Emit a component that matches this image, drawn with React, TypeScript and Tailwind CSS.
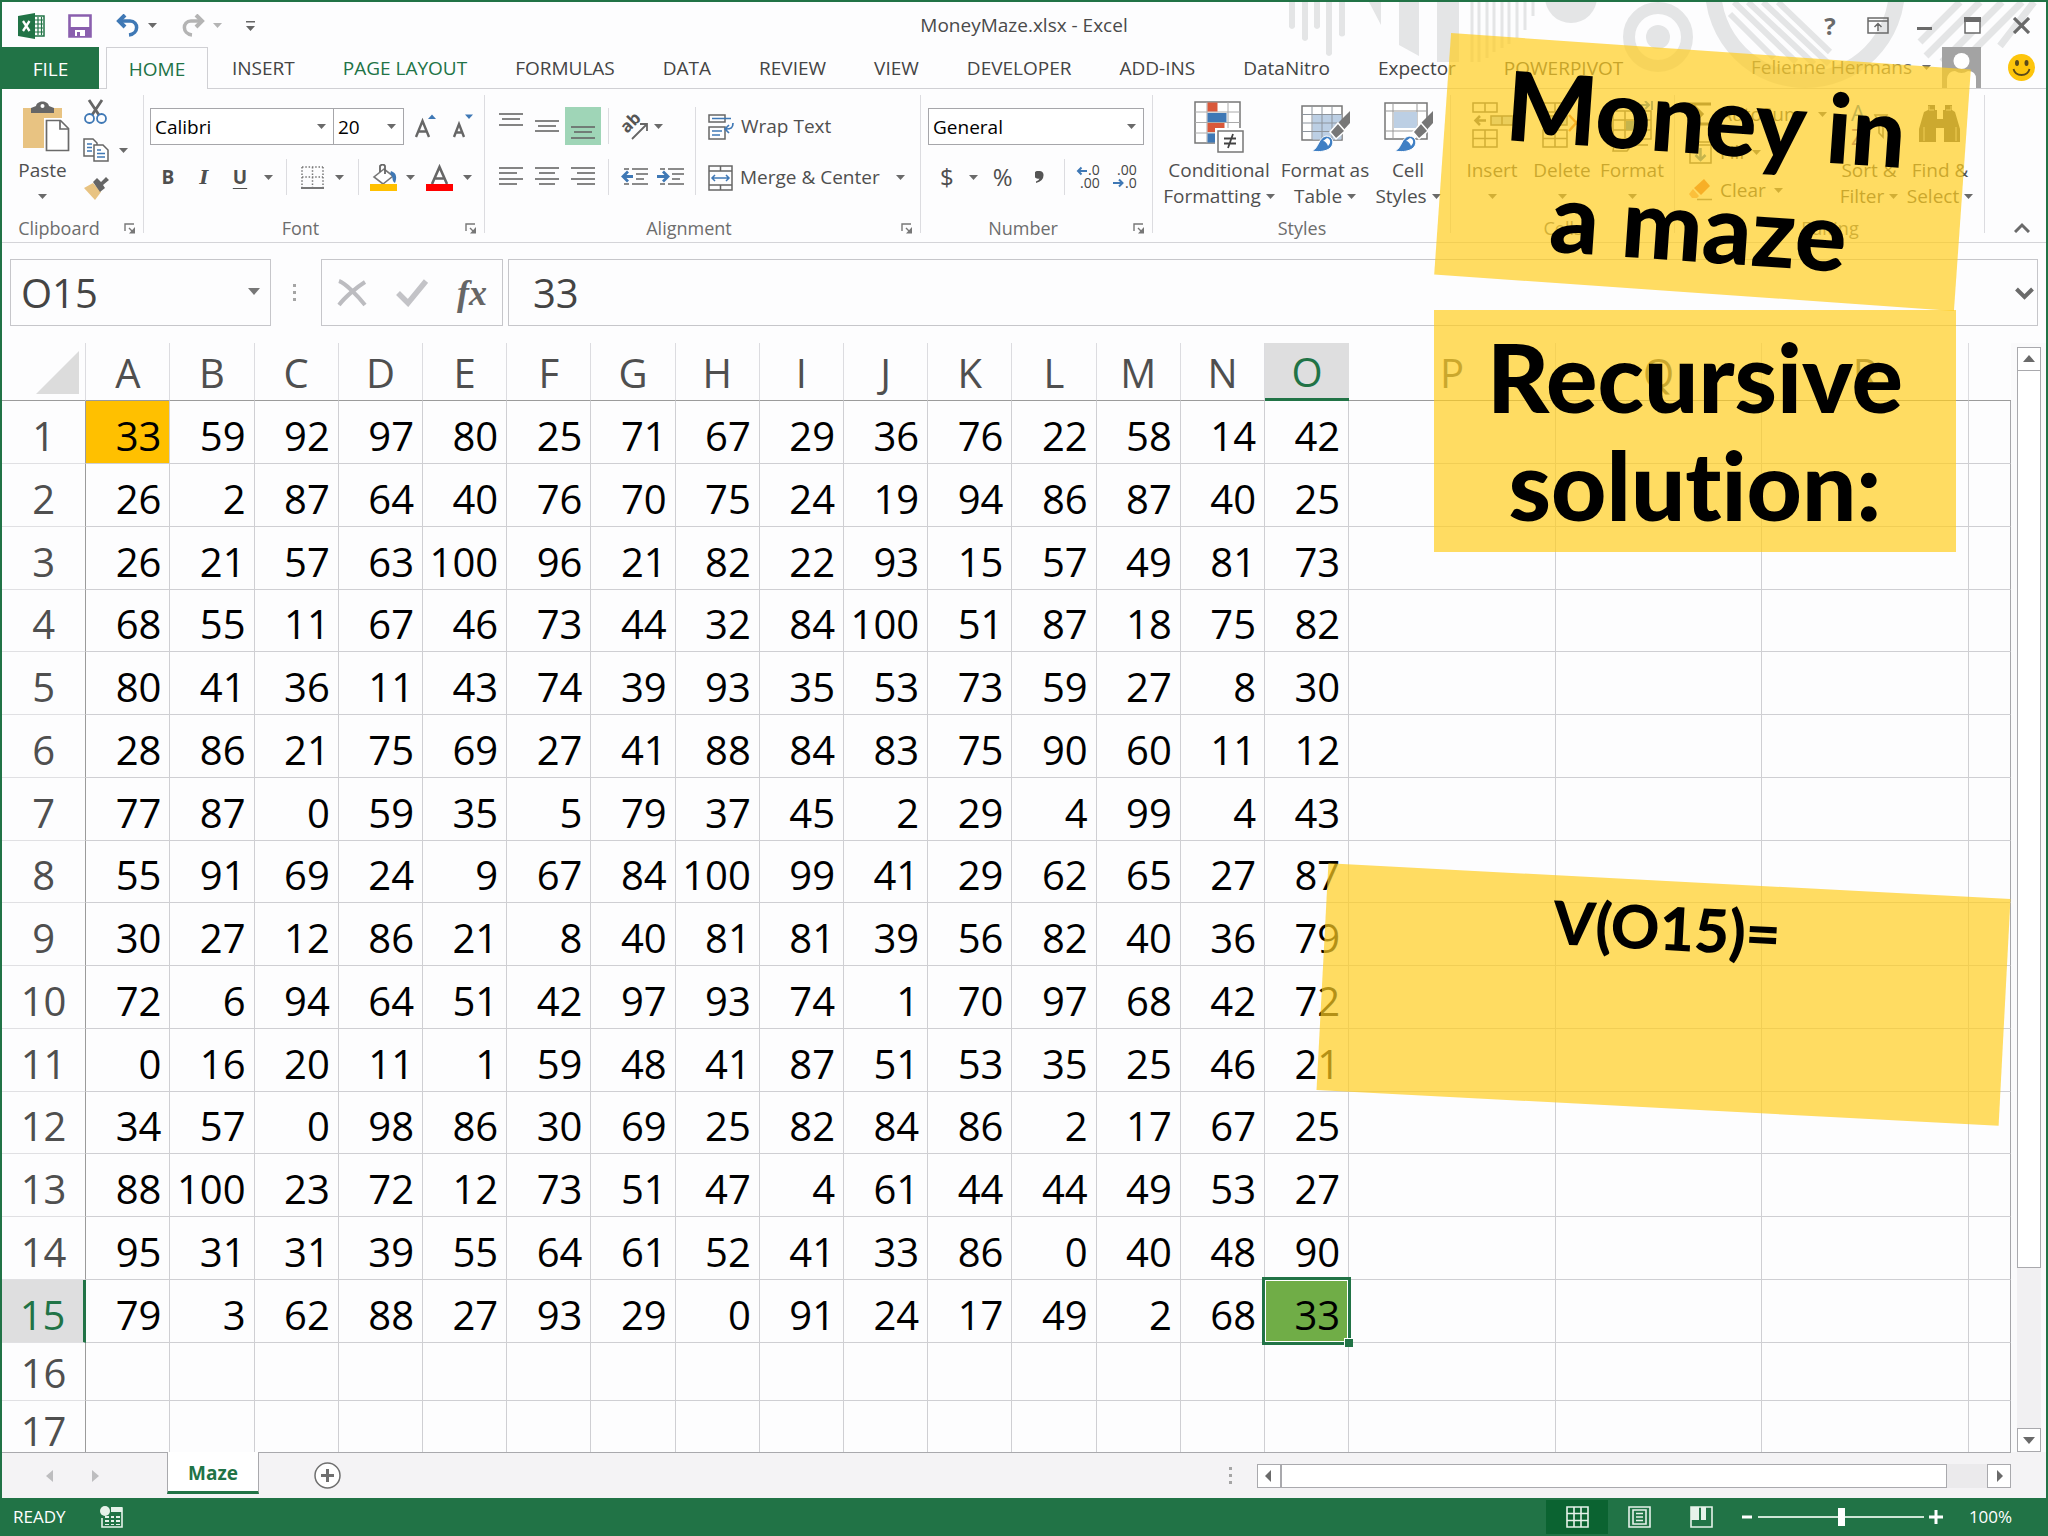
import React, { useState } from 'react';

const COLUMNS = ['A', 'B', 'C', 'D', 'E', 'F', 'G', 'H', 'I', 'J', 'K', 'L', 'M', 'N', 'O'];
const WIDE_COLUMNS = ['P', 'Q', 'R'];

const MAZE = [
  [33, 59, 92, 97, 80, 25, 71, 67, 29, 36, 76, 22, 58, 14, 42],
  [26, 2, 87, 64, 40, 76, 70, 75, 24, 19, 94, 86, 87, 40, 25],
  [26, 21, 57, 63, 100, 96, 21, 82, 22, 93, 15, 57, 49, 81, 73],
  [68, 55, 11, 67, 46, 73, 44, 32, 84, 100, 51, 87, 18, 75, 82],
  [80, 41, 36, 11, 43, 74, 39, 93, 35, 53, 73, 59, 27, 8, 30],
  [28, 86, 21, 75, 69, 27, 41, 88, 84, 83, 75, 90, 60, 11, 12],
  [77, 87, 0, 59, 35, 5, 79, 37, 45, 2, 29, 4, 99, 4, 43],
  [55, 91, 69, 24, 9, 67, 84, 100, 99, 41, 29, 62, 65, 27, 87],
  [30, 27, 12, 86, 21, 8, 40, 81, 81, 39, 56, 82, 40, 36, 79],
  [72, 6, 94, 64, 51, 42, 97, 93, 74, 1, 70, 97, 68, 42, 72],
  [0, 16, 20, 11, 1, 59, 48, 41, 87, 51, 53, 35, 25, 46, 21],
  [34, 57, 0, 98, 86, 30, 69, 25, 82, 84, 86, 2, 17, 67, 25],
  [88, 100, 23, 72, 12, 73, 51, 47, 4, 61, 44, 44, 49, 53, 27],
  [95, 31, 31, 39, 55, 64, 61, 52, 41, 33, 86, 0, 40, 48, 90],
  [79, 3, 62, 88, 27, 93, 29, 0, 91, 24, 17, 49, 2, 68, 33],
];

const TABS = [
  { name: 'INSERT' },
  { name: 'PAGE LAYOUT', accent: true },
  { name: 'FORMULAS' },
  { name: 'DATA' },
  { name: 'REVIEW' },
  { name: 'VIEW' },
  { name: 'DEVELOPER' },
  { name: 'ADD-INS' },
  { name: 'DataNitro' },
  { name: 'Expector' },
  { name: 'POWERPIVOT' },
];

function Caret({ className = 'text-[#6a6a6a]' }: { className?: string }) {
  return (
    <svg viewBox="0 0 9 5" className={`w-[9px] h-[5px] shrink-0 ${className}`} fill="currentColor">
      <path d="M0 0h9L4.500 5z" />
    </svg>
  );
}

function Launcher({ label }: { label: string }) {
  return (
    <button aria-label={label} className="absolute right-2 bottom-2">
      <svg viewBox="0 0 12 11" className="w-3 h-[11px]" fill="none" stroke="#777" strokeWidth="1.400">
        <path d="M1 8V1h9M5 5l4 4" />
        <path d="M11 4v6.500H5z" fill="#777" stroke="none" />
      </svg>
    </button>
  );
}

function Group({ name, width, launcher, children }: {
  name: string;
  width: string;
  launcher?: boolean;
  children: React.ReactNode;
}) {
  return (
    <section className={`relative shrink-0 h-[153px] flex flex-col ${width}`}>
      <div className="h-[126px]">{children}</div>
      <div className={`text-center text-lg leading-[26px] text-[#6d6d6d] ${launcher ? 'pr-7' : ''}`}>{name}</div>
      {launcher && <Launcher label={`${name} settings`} />}
      <span className="absolute right-0 top-[6px] bottom-[9px] w-px bg-[#dcdce0]" />
    </section>
  );
}

function Divider() {
  return <span className="w-px h-9 bg-[#dcdce0] shrink-0" />;
}

function BigButton({ icon, lines, width }: { icon: React.ReactNode; lines: string[]; width: string }) {
  return (
    <button className={`flex flex-col items-center pt-3 shrink-0 ${width}`}>
      <span className="h-14 flex items-start justify-center">{icon}</span>
      <span className="leading-[26px] whitespace-nowrap">{lines[0]}</span>
      <span className="h-[26px] leading-[26px] flex items-center gap-[5px] whitespace-nowrap">
        {lines[1]}
        <Caret />
      </span>
    </button>
  );
}

function Lines({ rows, height, label }: { rows: number[][]; height: number; label: string }) {
  return (
    <button aria-label={label} className="w-9 h-[38px] flex items-center justify-center">
      <svg width="24" height={height} stroke="#666" strokeWidth="1.600">
        {rows.map(([y, x1, x2]) => (
          <path key={y} d={`M${x1} ${y}H${x2}`} />
        ))}
      </svg>
    </button>
  );
}

const brush = (
  <g>
    <path d="M50 10v12L40 33l-7-6z" fill="#777" />
    <path d="M38 22l7 8-9 8-6-7z" fill="#777" stroke="#fff" strokeWidth="1.500" />
    <path d="M12 50c7-3 6-13 14-15 8 0 9 9 3 13-5 3-12 3-17 2z" fill="#3f7fc4" stroke="#fff" strokeWidth="1" />
    <path d="M27 37c4 1 4 5 1 8-1-3-3-5-5-5z" fill="#fff" />
  </g>
);

function ConditionalIcon() {
  return (
    <svg width="50" height="52" viewBox="0 0 50 52">
      <path d="M1 1h45v41H1z" fill="#fff" stroke="#777" strokeWidth="1.500" />
      <path d="M1 11h45M1 21.500h45M1 32h45M13 1v41M34 1v41" stroke="#aaa" fill="none" />
      <path d="M13.500 1.500h10v9h-10zM13.500 22h17v9h-17z" fill="#d9583a" />
      <path d="M13.500 12h19v9h-19zM13.500 32.500h8v9h-8z" fill="#3f78b5" />
      <path d="M21 27h30v25H21z" fill="#fff" />
      <path d="M24 30h25v21H24z" fill="#fff" stroke="#777" strokeWidth="1.500" />
      <path d="M30 37.500h12M30 42.500h12M39 33l-5 14" stroke="#444" strokeWidth="1.800" />
    </svg>
  );
}

function FormatTableIcon() {
  return (
    <svg width="50" height="52" viewBox="0 0 50 52">
      <path d="M2 5h40v34H2z" fill="#fff" stroke="#777" strokeWidth="1.500" />
      <path d="M12.500 13.500h29v25h-29z" fill="#bccfe4" />
      <path d="M2 13.500h40M2 22h40M2 30.500h40M12 5v34M22 5v34M32 5v34" stroke="#8d949c" fill="none" />
      {brush}
    </svg>
  );
}

function CellStylesIcon() {
  return (
    <svg width="50" height="52" viewBox="0 0 50 52">
      <path d="M2 2h42v36H2z" fill="#fff" stroke="#777" strokeWidth="1.500" />
      <path d="M2 10h42M2 30h42M10 2v36M34 2v36" stroke="#999" fill="none" />
      <path d="M11 11h23v16H11z" fill="#bccfe4" />
      {brush}
    </svg>
  );
}

function PasteIcon() {
  return (
    <svg width="54" height="52" viewBox="-6 0 54 52">
      <path d="M1 7h39v40H1z" fill="#e8c382" />
      <path d="M9 12V7l5-2c1-6 12-6 13 0l5 2v5z" fill="#666" />
      <circle cx="20.500" cy="5" r="2" fill="#fff" />
      <path d="M22 17h18l10 10v25H22z" fill="#fff" />
      <path d="M24.500 19.500h14l8 8v22h-22z" fill="#fff" stroke="#6a6a6a" strokeWidth="1.700" />
      <path d="M38 19.500v8.500h8.500" fill="none" stroke="#6a6a6a" strokeWidth="1.700" />
    </svg>
  );
}

function InsertCellsIcon() {
  return (
    <svg width="50" height="52" viewBox="0 0 50 52" fill="none" stroke="#666" strokeWidth="1.500">
      <path d="M6 2h24v9H6zM18 2v9M6 29h24v17H6zM18 29v17M6 37.500h24" />
      <path d="M24 15h22v9H24zM35 15v9" fill="#bccfe4" />
      <path d="M19 19.500H9M13 15l-4.500 4.500L13 24" strokeWidth="2.500" />
    </svg>
  );
}

function DeleteCellsIcon() {
  return (
    <svg width="50" height="52" viewBox="0 0 50 52" fill="none" stroke="#666" strokeWidth="1.500">
      <path d="M6 2h24v9H6zM18 2v9M6 29h24v17H6zM18 29v17M6 37.500h24" />
      <path d="M10 15h20v9H10z" fill="#bccfe4" />
      <path d="M32 14l15 16M48 12L32 30" stroke="#e8762c" strokeWidth="2.500" />
    </svg>
  );
}

function FormatCellsIcon() {
  return (
    <svg width="50" height="52" viewBox="0 0 50 52" fill="none" stroke="#666" strokeWidth="1.500">
      <path d="M6 10h38v28H6zM18 10v28M31 10v28M6 19h38M6 29h38" />
      <path d="M19 20h12v9H19z" fill="#3f78b5" stroke="none" />
      <path d="M8 39l-2 11h14l5-6h16" />
      <path d="M30 4h12M38 0l4 4-4 4M45 0v9" stroke="#3f78b5" strokeWidth="2" />
    </svg>
  );
}

function TitlePattern() {
  return (
    <svg width="766" height="86" viewBox="1280 2 766 86" className="absolute right-0 top-0" fill="#e4e5e6">
      <path d="M1289 2h6v25q-3 4-6 0zM1302 2h6v37q-3 4-6 0zM1314 2h6v25q-3 4-6 0zM1326 2h6v52q-3 4-6 0zM1339 2h6v33q-3 3-6 0z" />
      <path d="M1369 2h12v23zM1399 2h20v54l-20-11zM1437 2h22v60h-22z" />
      <path
        d="M1472 2v60M1479 2v60M1487 2v56M1494 2v50M1502 2v46M1509 2v42M1517 2v36M1525 2v28M1533 2v14"
        stroke="#e4e5e6"
        strokeWidth="3"
      />
      <circle cx="1571" cy="-3" r="26" />
      <circle cx="1658" cy="37" r="29" fill="none" stroke="#e4e5e6" strokeWidth="12" />
      <circle cx="1658" cy="37" r="12" />
      <circle cx="1805" cy="-12" r="92" fill="none" stroke="#e4e5e6" strokeWidth="16" />
      <path d="M1730 14l44 44M1734 2l62 60M1748 2l66 62M1763 2l66 62M1778 2l52 50" stroke="#e4e5e6" strokeWidth="6" />
      <path d="M1920 42l40-40M1926 56l54-54M1942 62l60-60M1960 64l62-62M2000 46l34-44" stroke="#e4e5e6" strokeWidth="7" />
    </svg>
  );
}

function TitleBar() {
  return (
    <div className="relative h-[45px] pt-[2px] grid grid-cols-[1fr_auto_1fr] items-center">
      <div className="flex items-center pl-4">
        <svg width="27" height="26" viewBox="0 0 27 26">
          <path d="M14 3h12v20H14z" fill="#fff" stroke="#217346" strokeWidth="1.500" />
          <path d="M17 7h8M17 11h8M17 15h8M17 19h8M20 4v18M23.500 4v18" stroke="#217346" strokeWidth="1.200" />
          <path d="M0 3l17-3v26L0 23z" fill="#217346" />
          <path d="M5 8l6.500 10M11.500 8L5 18" stroke="#fff" strokeWidth="2.300" />
        </svg>
        <button aria-label="Save" className="ml-[23px]">
          <svg width="24" height="24" viewBox="0 0 24 24">
            <path d="M1.500 1.500h21v21h-21z" fill="#fff" stroke="#8a5fae" strokeWidth="2.600" />
            <path d="M2 13h20v9H2z" fill="#8a5fae" />
            <path d="M7 16h10v6H7z" fill="#fff" />
            <path d="M9 18h3v4H9z" fill="#8a5fae" />
          </svg>
        </button>
        <button aria-label="Undo" className="ml-6 flex items-center gap-2">
          <svg width="24" height="23" viewBox="0 0 24 23" fill="none" stroke="#3f78b5">
            <path d="M2 7h12c9 0 9 13-1 14" strokeWidth="3.500" />
            <path d="M9 1L3 7l6 6" strokeWidth="4" />
          </svg>
          <Caret />
        </button>
        <button aria-label="Redo" className="ml-6 flex items-center gap-2">
          <svg width="24" height="23" viewBox="0 0 24 23" fill="none" stroke="#b4b4b4">
            <path d="M22 7H10c-9 0-9 13 1 14" strokeWidth="3.500" />
            <path d="M15 1l6 6-6 6" strokeWidth="4" />
          </svg>
          <Caret className="text-[#b4b4b4]" />
        </button>
        <button aria-label="Customize toolbar" className="ml-6">
          <svg width="9" height="10" viewBox="0 0 9 10" fill="#666">
            <path d="M0 0h9v1.500H0zM0 5h9L4.500 10z" />
          </svg>
        </button>
      </div>
      <h1 className="text-[19px] text-[#4a4a4a]">MoneyMaze.xlsx - Excel</h1>
      <div className="flex items-center justify-end pr-4 text-[#6a6a6a]">
        <button aria-label="Help" className="font-bold text-[24px] w-[22px] mr-[26px] leading-6">?</button>
        <button aria-label="Ribbon display" className="mr-7">
          <svg width="22" height="17" viewBox="0 0 22 17" fill="none" stroke="currentColor" strokeWidth="1.500">
            <path d="M1 1h20v15H1zM1 4h20M11 14V7M7.500 10L11 6.500l3.500 3.500" />
          </svg>
        </button>
        <button aria-label="Minimize" className="mr-8">
          <svg width="15" height="17" viewBox="0 0 15 17">
            <path d="M0 10h15v3H0z" fill="currentColor" />
          </svg>
        </button>
        <button aria-label="Maximize" className="mr-8">
          <svg width="17" height="17" viewBox="0 0 17 17">
            <path d="M1 1h15v15H1z" fill="#fff" stroke="currentColor" strokeWidth="1.500" />
            <path d="M0 0h17v5H0z" fill="currentColor" />
          </svg>
        </button>
        <button aria-label="Close">
          <svg width="17" height="17" viewBox="0 0 17 17" stroke="currentColor" strokeWidth="3.200">
            <path d="M1 1l15 15M16 1L1 16" />
          </svg>
        </button>
      </div>
    </div>
  );
}

function TabBar() {
  return (
    <nav className="relative h-[42px] flex items-stretch text-[19px] text-[#444] border-b border-[#d0d0d4]">
      <button className="w-[97px] mr-[7px] pt-[2px] -mb-px bg-[#217346] text-white">FILE</button>
      <button className="w-[102px] pt-px -mb-px bg-[#fdfdfe] border border-b-0 border-[#d0d0d4] text-[#217346]">HOME</button>
      {TABS.map((tab) => (
        <button key={tab.name} className={`px-6 pt-[2px] whitespace-nowrap ${tab.accent ? 'text-[#217346]' : ''}`}>
          {tab.name}
        </button>
      ))}
      <div className="ml-auto flex items-center pr-[11px]">
        <button className="flex items-center gap-[10px] mr-[11px] text-[#6a6a6a]">
          Felienne Hermans
          <Caret />
        </button>
        <svg width="39" height="41" viewBox="0 0 39 41" className="mr-[27px]">
          <path d="M0 0h39v41H0z" fill="#a3a3a3" />
          <circle cx="19.500" cy="14" r="8" fill="#fff" />
          <path d="M5 41V32q1-8 8-8 6.500 4 13 0 8 0 8 8v9z" fill="#fff" />
        </svg>
        <button aria-label="Send a smile">
          <svg width="27" height="27" viewBox="0 0 27 27">
            <circle cx="13.500" cy="13.500" r="13.500" fill="#fdc50c" />
            <ellipse cx="9" cy="9" rx="2" ry="3" fill="#5b4a1a" />
            <ellipse cx="18.500" cy="9" rx="2" ry="3" fill="#5b4a1a" />
            <path d="M5.500 15c2 8 14 8 16 0" fill="none" stroke="#5b4a1a" strokeWidth="1.800" />
          </svg>
        </button>
      </div>
    </nav>
  );
}

function Combo({ label, value, width }: { label: string; value: string; width: string }) {
  return (
    <div className={`relative h-[37px] ${width}`}>
      <select
        aria-label={label}
        defaultValue={value}
        className="appearance-none w-full h-full pl-1 pt-px bg-white border border-[#a6a6aa] text-black leading-[26px]"
      >
        <option>{value}</option>
      </select>
      <span className="absolute right-2 top-0 h-9 flex items-center pointer-events-none">
        <Caret />
      </span>
    </div>
  );
}

function Ribbon() {
  return (
    <div className="relative flex text-[19px] text-[#4f4f4f] border-b border-[#d4d4d8]">
      <Group name="Clipboard" width="w-[142px]" launcher>
        <div className="flex">
          <BigButton width="w-[81px]" icon={<PasteIcon />} lines={['Paste', '']} />
          <div className="flex flex-col items-start pt-[10px] gap-[13px]">
            <button aria-label="Cut">
              <svg width="26" height="26" viewBox="0 0 26 26" fill="none">
                <path d="M6 1l10 15M19 1L9 16" stroke="#666" strokeWidth="2.800" />
                <circle cx="6.500" cy="19.500" r="4.500" stroke="#3f78b5" strokeWidth="1.800" />
                <circle cx="18.500" cy="19.500" r="4.500" stroke="#3f78b5" strokeWidth="1.800" />
              </svg>
            </button>
            <button aria-label="Copy" className="flex items-center gap-[10px]">
              <svg width="26" height="25" viewBox="0 0 26 25" fill="#fff" stroke="#666" strokeWidth="1.500">
                <path d="M1 1h9l4 4v13H1z" />
                <path d="M11 7h9l5 5v11H11z" />
                <path d="M4 6h5M4 9.500h5M4 13h5M14 12h4M14 15.500h8M14 19h8" stroke="#3f78b5" />
              </svg>
              <Caret />
            </button>
            <button aria-label="Format painter">
              <svg width="26" height="24" viewBox="0 0 26 24">
                <path d="M1 12l9-5 8 9-6 8z" fill="#e8c382" />
                <path d="M10 6l4-4 4 4 5-5 3 3-6 5 2 3-5 4z" fill="#666" />
              </svg>
            </button>
          </div>
        </div>
      </Group>

      <Group name="Font" width="w-[341px]" launcher>
        <div className="flex pt-[19px] pl-[6px]">
          <Combo label="Font" value="Calibri" width="w-[184px]" />
          <Combo label="Font size" value="20" width="w-[71px] -ml-px" />
          <button aria-label="Increase font size" className="ml-[10px]">
            <svg width="24" height="30" viewBox="0 0 24 30">
              <path d="M2 25L8.500 9 15 25M4.500 19.500h8" fill="none" stroke="#666" strokeWidth="2.400" />
              <path d="M14 7h8l-4-4.500z" fill="#3f78b5" />
            </svg>
          </button>
          <button aria-label="Decrease font size" className="ml-[14px]">
            <svg width="24" height="30" viewBox="0 0 24 30">
              <path d="M2 25l5-13 5 13M4 20.500h6" fill="none" stroke="#666" strokeWidth="2.400" />
              <path d="M13 2.500h8L17 7z" fill="#3f78b5" />
            </svg>
          </button>
        </div>
        <div className="flex items-center h-9 mt-[14px] pl-[13px]">
          <button className="w-[22px] font-bold">B</button>
          <button className="w-[22px] ml-[14px] italic font-semibold [font-family:'DejaVu_Serif',serif]">I</button>
          <button className="w-[22px] ml-[14px] font-bold underline underline-offset-4">U</button>
          <span className="ml-[13px] mr-[13px] flex"><Caret /></span>
          <Divider />
          <button aria-label="Borders" className="ml-[14px] mr-[11px]">
            <svg width="23" height="23" viewBox="0 0 23 23" stroke="#777" strokeWidth="1.500" fill="none">
              <path d="M1 1h21M1 11h21M1 1v20M11.500 1v20M22 1v20" strokeDasharray="1.500 1.800" />
              <path d="M0 22h23" strokeWidth="2" />
            </svg>
          </button>
          <Caret />
          <span className="w-[14px]" />
          <Divider />
          <button aria-label="Fill color" className="ml-[11px] mr-[9px]">
            <svg width="27" height="27" viewBox="0 0 27 27">
              <path d="M14 5L4 13l9 7 10-8z" fill="#fff" stroke="#777" strokeWidth="1.600" />
              <path d="M10 8V2q3-3 5 0v8" fill="none" stroke="#666" strokeWidth="1.800" />
              <path d="M21 7c6 2 6 7 4 12-4-2-1-7-5-9z" fill="#3f78b5" />
              <path d="M0 20h27v7H0z" fill="#ffc000" />
            </svg>
          </button>
          <Caret />
          <button aria-label="Font color" className="ml-[11px] mr-[10px]">
            <svg width="27" height="27" viewBox="0 0 27 27">
              <path d="M6 20L13.500 3 21 20M9 14.500h9" fill="none" stroke="#666" strokeWidth="2.600" />
              <path d="M0 20h27v7H0z" fill="#f00" />
            </svg>
          </button>
          <Caret />
        </div>
      </Group>

      <Group name="Alignment" width="w-[436px]" launcher>
        <div className="flex pt-[18px] pl-2">
          <div className="grid grid-cols-3 gap-y-[13px]">
            <Lines label="Top align" height={26} rows={[[1, 0, 24], [6, 3, 21], [12, 0, 24]]} />
            <Lines label="Middle align" height={12} rows={[[1, 0, 24], [6, 3, 21], [11, 0, 24]]} />
            <div className="bg-[#9fd5b7]">
              <Lines label="Bottom align" height={26} rows={[[14, 0, 24], [19, 3, 21], [25, 0, 24]]} />
            </div>
            <Lines label="Align left" height={20} rows={[[1, 0, 24], [6, 0, 18], [12, 0, 24], [17, 0, 18]]} />
            <Lines label="Center" height={20} rows={[[1, 0, 24], [6, 4, 20], [12, 0, 24], [17, 4, 20]]} />
            <Lines label="Align right" height={20} rows={[[1, 0, 24], [6, 6, 24], [12, 0, 24], [17, 6, 24]]} />
          </div>
          <div className="ml-[7px] flex flex-col gap-[13px]">
            <div className="flex items-center h-[38px]">
              <Divider />
              <button aria-label="Orientation" className="ml-3 mr-[6px]">
                <svg width="27" height="27" viewBox="0 0 27 27" className="overflow-visible">
                  <text x="0" y="0" transform="translate(6 21) rotate(-45)" fontSize="17" fontWeight="700" fill="#555">ab</text>
                  <path d="M11 26L25 12M19 11h7v7" fill="none" stroke="#666" strokeWidth="1.800" />
                </svg>
              </button>
              <Caret />
            </div>
            <div className="flex items-center h-[38px]">
              <Divider />
              <button aria-label="Decrease indent" className="ml-3 mr-[9px]">
                <svg width="27" height="18" viewBox="0 0 27 18" fill="none" stroke="#666" strokeWidth="1.600">
                  <path d="M3 1h5M11 1h16M15 6h12M15 11h8M3 16h5M11 16h16" />
                  <path d="M12 8.500H2M7 3.500l-5 5 5 5" stroke="#3f78b5" strokeWidth="2.800" />
                </svg>
              </button>
              <button aria-label="Increase indent">
                <svg width="27" height="18" viewBox="0 0 27 18" fill="none" stroke="#666" strokeWidth="1.600">
                  <path d="M3 1h5M11 1h16M15 6h12M15 11h8M3 16h5M11 16h16" />
                  <path d="M0 8.500h10M6 3.500l5 5-5 5" stroke="#3f78b5" strokeWidth="2.800" />
                </svg>
              </button>
            </div>
          </div>
          <span className="w-px h-[88px] ml-[11px] bg-[#dcdce0]" />
          <div className="ml-3 flex flex-col gap-[13px]">
            <button className="flex items-center h-[38px] gap-[6px] pt-px">
              <svg width="27" height="26" viewBox="0 0 27 26" fill="none" stroke="#666" strokeWidth="1.500">
                <path d="M1 1h16v7H1zM1 13h16v12H1z" />
                <path d="M4 4.500h19M4 17h10M4 21h8M25 9c0 5-2 6-7 6M21 11l-4 4 4 4" stroke="#3f78b5" strokeWidth="1.700" />
              </svg>
              Wrap Text
            </button>
            <button className="flex items-center h-[38px] gap-[6px] pt-px">
              <svg width="26" height="26" viewBox="0 0 26 26" fill="none" stroke="#666" strokeWidth="1.500">
                <path d="M1 1h23v24H1zM1 6h23M1 20h23M12.500 1v5M12.500 20v5" />
                <path d="M4 13h17M7 10l-3 3 3 3M18 10l3 3-3 3" stroke="#3f78b5" />
              </svg>
              Merge &amp; Center
              <span className="ml-[10px]"><Caret /></span>
            </button>
          </div>
        </div>
      </Group>

      <Group name="Number" width="w-[232px]" launcher>
        <div className="pt-[19px] pl-[7px]">
          <Combo label="Number format" value="General" width="w-[216px]" />
        </div>
        <div className="flex items-center h-9 mt-[14px] pl-[19px] text-2xl">
          <button aria-label="Currency" className="flex items-center gap-[15px]">$ <Caret /></button>
          <button className="ml-[15px]">%</button>
          <button aria-label="Comma style" className="ml-[22px] mr-5">
            <svg width="9" height="12" viewBox="0 0 9 12">
              <path d="M4.500 0a4 4 0 1 0 0 7.500Q4 9.500 1 10.500v1.500Q9 10 8.500 3.500A4 4 0 0 0 4.500 0z" fill="#555" />
            </svg>
          </button>
          <Divider />
          <button aria-label="Increase decimal" className="ml-[11px] mr-[13px]">
            <svg width="24" height="26" viewBox="0 0 24 26" className="overflow-visible">
              <path d="M11 7H2M5.500 3.500L2 7l3.500 3.500" fill="none" stroke="#3f78b5" strokeWidth="2" />
              <text x="12" y="11" fontSize="14" fill="#444">.0</text>
              <text x="4" y="24" fontSize="14" fill="#444">.00</text>
            </svg>
          </button>
          <button aria-label="Decrease decimal">
            <svg width="24" height="26" viewBox="0 0 24 26" className="overflow-visible">
              <path d="M0 19h9M6 15.500l3.500 3.500L6 22.500" fill="none" stroke="#3f78b5" strokeWidth="2" />
              <text x="4" y="11" fontSize="14" fill="#444">.00</text>
              <text x="12" y="24" fontSize="14" fill="#444">.0</text>
            </svg>
          </button>
        </div>
      </Group>

      <Group name="Styles" width="w-[298px]">
        <div className="flex pl-2">
          <BigButton width="w-[116px]" icon={<ConditionalIcon />} lines={['Conditional', 'Formatting']} />
          <BigButton width="w-24" icon={<FormatTableIcon />} lines={['Format as', 'Table']} />
          <BigButton width="w-[70px]" icon={<CellStylesIcon />} lines={['Cell', 'Styles']} />
        </div>
      </Group>

      <Group name="Cells" width="w-[224px]">
        <div className="flex pl-[6px]">
          <BigButton width="w-[70px]" icon={<InsertCellsIcon />} lines={['Insert', '']} />
          <BigButton width="w-[70px]" icon={<DeleteCellsIcon />} lines={['Delete', '']} />
          <BigButton width="w-[70px]" icon={<FormatCellsIcon />} lines={['Format', '']} />
        </div>
      </Group>

      <Group name="Editing" width="w-[310px]">
        <div className="flex pl-[14px]">
          <div className="flex flex-col items-start pt-3 gap-3 w-[145px]">
            <button className="flex items-center gap-2 leading-[26px]">
              <svg width="23" height="24" viewBox="0 0 23 24" fill="none" stroke="#555" strokeWidth="3">
                <path d="M22 2H3l10 10L3 22h19" />
              </svg>
              AutoSum
              <span className="ml-2"><Caret /></span>
            </button>
            <button className="flex items-center gap-2 leading-[26px]">
              <svg width="23" height="23" viewBox="0 0 23 23" fill="none" stroke="#666" strokeWidth="1.500">
                <path d="M1 1h21v21H1zM1 4h21" />
                <path d="M11.500 7v12M6.500 14l5 5 5-5" stroke="#3f78b5" strokeWidth="2.500" />
              </svg>
              Fill
              <Caret />
            </button>
            <button className="flex items-center gap-2 leading-[26px]">
              <svg width="23" height="22" viewBox="0 0 23 22">
                <path d="M15 0l6 7-9 9-7-7z" fill="#e56a3a" />
                <path d="M4 10l6 7-2 2H3l-3-4z" fill="#f0a080" />
                <path d="M8 20.500h15" stroke="#777" strokeWidth="1.500" />
              </svg>
              Clear
              <Caret />
            </button>
          </div>
          <BigButton
            width="w-[70px]"
            icon={
              <svg width="40" height="52" viewBox="0 0 40 52">
                <text x="2" y="20" fontSize="22" fill="#3f78b5">A</text>
                <text x="2" y="44" fontSize="22" fill="#7d50a0">Z</text>
                <path d="M26 14h12l-4 8v14l-4-4V22z" fill="none" stroke="#666" strokeWidth="1.600" />
              </svg>
            }
            lines={['Sort &', 'Filter']}
          />
          <BigButton
            width="w-[72px]"
            icon={
              <svg width="44" height="52" viewBox="0 0 44 52" fill="#555">
                <path d="M10 4h7v5h2v9h6V9h2V4h7v5l3 2 5 17v13H26V27h-8v14H1V28l5-17 4-2z" />
                <path d="M6 26v14M38 26v14M11 5v4h5M33 5v4h-5" stroke="#ccc" fill="none" />
              </svg>
            }
            lines={['Find &', 'Select']}
          />
        </div>
      </Group>
      <button aria-label="Collapse ribbon" className="ml-auto mr-4 self-end mb-[9px]">
        <svg width="16" height="11" viewBox="0 0 16 11" fill="none" stroke="#6a6a6a" strokeWidth="3">
          <path d="M1 10l7-7 7 7" />
        </svg>
      </button>
    </div>
  );
}

function FormulaBar({ cell, value }: { cell: string; value: string }) {
  return (
    <div className="flex items-center pt-4 pb-[17px] pl-2 pr-2 text-[40px] text-[#444]">
      <div className="relative w-[261px] h-[67px]">
        <input aria-label="Name box" defaultValue={cell} className="w-full h-full pl-[10px] border border-[#c6c6ca]" />
        <svg viewBox="0 0 12 7" className="absolute right-[11px] top-[29px] w-3 h-[7px]" fill="#777">
          <path d="M0 0h12L6 7z" />
        </svg>
      </div>
      <svg width="4" height="18" viewBox="0 0 4 18" className="ml-[22px] mr-6" fill="#a5a5a5">
        <path d="M0 0h3v3H0zM0 7h3v3H0zM0 14h3v3H0z" />
      </svg>
      <div className="w-[182px] h-[67px] border border-[#c6c6ca] flex items-center justify-between px-[15px]">
        <button aria-label="Cancel">
          <svg width="30" height="28" viewBox="0 0 30 28" stroke="#bcbcc0" fill="none">
            <path d="M2 2c6 2 18 14 26 24" strokeWidth="4" />
            <path d="M28 3C20 8 8 18 2 26" strokeWidth="4" />
          </svg>
        </button>
        <button aria-label="Enter">
          <svg width="32" height="28" viewBox="0 0 32 28" stroke="#c3c3c7" fill="none">
            <path d="M2 14l10 10L30 2" strokeWidth="5.500" />
          </svg>
        </button>
        <button className="italic font-bold text-[36px] leading-10 text-[#666] [font-family:'Liberation_Serif',serif]">fx</button>
      </div>
      <div className="relative flex-1 ml-[5px] h-[67px]">
        <input aria-label="Formula" defaultValue={value} className="w-full h-full pl-6 border border-[#c6c6ca]" />
        <button aria-label="Expand formula bar" className="absolute right-1 top-[28px]">
          <svg width="19" height="14" viewBox="0 0 19 14" fill="none" stroke="#6a6a6a" strokeWidth="4">
            <path d="M1.500 2l8 8 8-8" />
          </svg>
        </button>
      </div>
    </div>
  );
}

function SheetGrid() {
  const header = 'h-[58px] p-0 align-bottom leading-[54px] font-normal border-r border-b border-r-[#dcdce0] border-b-[#9b9b9b]';
  const rowHead = 'p-0 align-bottom leading-[54px] font-normal border-r border-b border-b-[#e0e0e3]';
  const empty = 'p-0 border-r border-b border-[#cfcfd3]';
  const rows = Array.from({ length: 17 }, (_, i) => i);

  return (
    <table className="w-full table-fixed border-separate border-spacing-0 text-[40px] text-black">
      <colgroup>
        <col className="w-[84px]" />
        {COLUMNS.map((c) => <col key={c} className="w-[84px]" />)}
        {WIDE_COLUMNS.map((c) => <col key={c} className="w-[206px]" />)}
        <col className="w-[42px]" />
      </colgroup>
      <thead>
        <tr className="text-[#4f4f4f]">
          <th className={header}>
            <svg width="43" height="43" viewBox="0 0 43 43" className="ml-auto mr-[6px] mb-[6px]" fill="#dcdcdc">
              <path d="M43 0v43H0z" />
            </svg>
          </th>
          {COLUMNS.map((c) => (
            <th
              key={c}
              className={c === 'O'
                ? 'h-[58px] p-0 align-bottom leading-[52px] font-normal bg-[#dededf] text-[#217346] border-b-3 border-[#217346]'
                : header}
            >
              {c}
            </th>
          ))}
          {WIDE_COLUMNS.map((c) => <th key={c} className={header}>{c}</th>)}
          <th aria-label="Next column" className="p-0 border-b border-[#9b9b9b]" />
        </tr>
      </thead>
      <tbody>
        {rows.map((r) => (
          <tr key={r} className={r > 14 ? 'h-[58px]' : r % 4 === 3 ? 'h-[62px]' : 'h-[63px]'}>
            <th
              className={`${rowHead} ${r === 14
                ? 'bg-[#dededf] text-[#217346] border-r-3 border-r-[#217346]'
                : 'text-[#4f4f4f] border-r-[#9b9b9b]'}`}
            >
              {r + 1}
            </th>
            {COLUMNS.map((c, i) => {
              const selected = r === 14 && c === 'O';
              const start = r === 0 && c === 'A';
              return (
                <td
                  key={c}
                  className={`${empty} align-bottom text-right leading-[54px] pr-2 ${
                    selected ? 'relative bg-[#70ad47]' : start ? 'bg-[#ffc000]' : ''
                  }`}
                >
                  {r < 15 ? MAZE[r][i] : ''}
                  {selected && (
                    <>
                      <span className="absolute -inset-[3px] border-3 border-[#217346]" />
                      <span className="absolute inset-0 border border-white" />
                      <span className="absolute -right-[5px] -bottom-[5px] w-[9px] h-[9px] bg-[#217346] border-l border-t border-white" />
                    </>
                  )}
                </td>
              );
            })}
            {WIDE_COLUMNS.map((c) => <td key={c} className={empty} />)}
            <td className="p-0 border-b border-r border-b-[#cfcfd3] border-r-[#a5a5a9]" />
          </tr>
        ))}
      </tbody>
    </table>
  );
}

function ScrollArrow({ label, d }: { label: string; d: string }) {
  return (
    <button aria-label={label} className="w-6 h-6 shrink-0 bg-white border border-[#a9a9ad] flex items-center justify-center">
      <svg width="12" height="12" viewBox="0 0 12 12" fill="#6a6a6a">
        <path d={d} />
      </svg>
    </button>
  );
}

function SheetTabs() {
  return (
    <div className="h-[46px] shrink-0 flex bg-[#f4f3f5]">
      <div className="flex-1 flex border-t border-[#a9a9ad]">
        <div className="w-[165px] flex items-center pl-11 gap-[39px]">
          <button aria-label="Previous sheet">
            <svg width="7" height="12" viewBox="0 0 7 12" fill="#bdbdbf"><path d="M7 0v12L0 6z" /></svg>
          </button>
          <button aria-label="Next sheet">
            <svg width="7" height="12" viewBox="0 0 7 12" fill="#bdbdbf"><path d="M0 0v12l7-6z" /></svg>
          </button>
        </div>
        <button className="w-[92px] h-[42px] pt-1 -mt-px bg-white border-x border-x-[#a9a9ad] border-b-3 border-b-[#217346] text-[19px] font-bold text-[#217346]">
          Maze
        </button>
        <button aria-label="New sheet" className="ml-[55px]">
          <svg width="27" height="27" viewBox="0 0 27 27" fill="#fff" stroke="#6f6f6f">
            <circle cx="13.500" cy="13.500" r="12.500" strokeWidth="1.500" />
            <path d="M13.500 7v13M7 13.500h13" strokeWidth="3" />
          </svg>
        </button>
        <div className="ml-auto w-[782px] flex items-center">
          <svg width="3" height="17" viewBox="0 0 3 17" className="mr-[25px]" fill="#a5a5a5">
            <path d="M0 0h3v3H0zM0 7h3v3H0zM0 14h3v3H0z" />
          </svg>
          <div className="flex-1 flex bg-[#ebeaec]">
            <ScrollArrow label="Scroll left" d="M8 0v12L2 6z" />
            <span className="flex-1 bg-white border border-[#a9a9ad]" />
            <span className="w-10" />
            <ScrollArrow label="Scroll right" d="M4 0v12l6-6z" />
          </div>
        </div>
      </div>
      <div className="w-[35px]" />
    </div>
  );
}

function StatusBar() {
  const [zoom, setZoom] = useState(100);
  return (
    <footer className="h-[38px] shrink-0 bg-[#217346] text-white flex items-center text-[17px] pl-[11px]">
      <span>READY</span>
      <button aria-label="Record macro" className="ml-[34px]">
        <svg width="23" height="22" viewBox="0 0 23 22" fill="#e6f2ea">
          <path d="M12 2h10v19H2v-9" fill="none" stroke="#e6f2ea" strokeWidth="1.600" />
          <path d="M11 1h11v5H11z" />
          <circle cx="5" cy="5" r="5" />
          <path d="M5 10h4v2H5zM11 10h3v2h-3zM16 10h4v2h-4zM5 14h4v2H5zM11 14h3v2h-3zM16 14h4v2h-4zM5 18h4v1H5zM11 18h3v1h-3zM16 18h4v1h-4z" />
        </svg>
      </button>
      <div className="ml-auto flex items-center h-full">
        <button aria-label="Normal view" className="w-[62px] h-[34px] bg-[#0b6331] flex items-center justify-center">
          <svg width="23" height="22" viewBox="0 0 23 22" fill="none" stroke="#e6f2ea" strokeWidth="1.600">
            <path d="M1 1h21v20H1zM8 1v20M15 1v20M1 7.500h21M1 14.500h21" />
          </svg>
        </button>
        <button aria-label="Page layout view" className="w-[62px] flex justify-center">
          <svg width="23" height="22" viewBox="0 0 23 22" fill="none" stroke="#e6f2ea" strokeWidth="1.600">
            <path d="M1 1h21v20H1zM5 4h13v14H5zM8 7.500h7M8 11h7M8 14.500h7" />
          </svg>
        </button>
        <button aria-label="Page break view" className="w-[62px] flex justify-center">
          <svg width="23" height="22" viewBox="0 0 23 22" fill="none" stroke="#e6f2ea" strokeWidth="1.600">
            <path d="M1 1h21v20H1z" />
            <path d="M1 1h8v13H1zM11 1h5v13h-5z" fill="#e6f2ea" stroke="none" />
          </svg>
        </button>
        <button aria-label="Zoom out" className="ml-[9px]">
          <svg width="12" height="14"><path d="M1 5.500h10v3H1z" fill="#fff" /></svg>
        </button>
        <input
          type="range"
          aria-label="Zoom"
          min={0}
          max={200}
          value={zoom}
          onChange={(e) => setZoom(Number(e.target.value))}
          className="appearance-none w-[166px] h-5 mx-[5px] bg-transparent [&::-webkit-slider-runnable-track]:h-[2px] [&::-webkit-slider-runnable-track]:bg-[#cfe6d7] [&::-webkit-slider-thumb]:appearance-none [&::-webkit-slider-thumb]:w-[7px] [&::-webkit-slider-thumb]:h-[18px] [&::-webkit-slider-thumb]:-mt-2 [&::-webkit-slider-thumb]:bg-white"
        />
        <button aria-label="Zoom in">
          <svg width="14" height="14"><path d="M0 5.500h5.500V0h3v5.500H14v3H8.500V14h-3V8.500H0z" fill="#fff" /></svg>
        </button>
        <span className="w-[103px] pr-2 text-center">{zoom}%</span>
      </div>
    </footer>
  );
}

function Note({ className, children }: { className: string; children: React.ReactNode }) {
  return (
    <div className={`absolute bg-[#ffcd1fb3] text-black text-center font-black [font-family:Lato,sans-serif] [font-variant-ligatures:none] ${className}`}>
      {children}
    </div>
  );
}

export default function App() {
  return (
    <div className="relative h-screen overflow-hidden flex flex-col bg-[#fdfdfe] border-x-2 border-t-2 border-[#217346] [font-family:'Open_Sans','Noto_Sans',sans-serif]">
      <header className="relative shrink-0">
        <TitlePattern />
        <TitleBar />
        <TabBar />
        <Ribbon />
        <FormulaBar cell="O15" value="33" />
      </header>

      <main className="flex-1 min-h-0 flex">
        <div className="flex-1 overflow-hidden">
          <SheetGrid />
        </div>
        <div className="w-[35px] pl-[6px] pt-1 flex flex-col bg-[#fafafb]">
          <ScrollArrow label="Scroll up" d="M0 9h12L6 2z" />
          <div className="flex-1 w-6 -mt-px pb-40 bg-[#f1f0f2] flex">
            <span className="flex-1 bg-white border border-[#a9a9ad]" />
          </div>
          <ScrollArrow label="Scroll down" d="M0 3h12l-6 7z" />
        </div>
      </main>

      <SheetTabs />
      <StatusBar />

      <Note className="right-[83px] top-[49px] w-[521px] h-[242px] pt-3 rotate-4 text-[96px] leading-[108px]">
        Money in
        <br />
        a maze
      </Note>
      <Note className="right-[90px] top-[308px] w-[522px] h-[242px] pt-3 text-[96px] leading-[108px]">
        Recursive
        <br />
        solution:
      </Note>
      <Note className="right-[41px] top-[879px] w-[683px] h-[227px] pt-3 rotate-3 text-[60px] leading-[68px]">
        V(O15)=
      </Note>
    </div>
  );
}
